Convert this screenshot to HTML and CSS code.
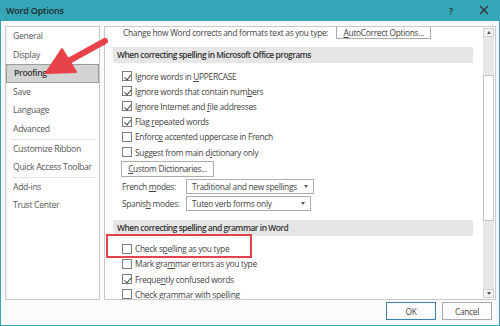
FILE: index.html
```html
<!DOCTYPE html>
<html lang="en">
<head>
  <meta charset="UTF-8" />
  <title>Word Options</title>
  <link rel="stylesheet" href="styles.css">
</head>
<body>
  <div class="window">
    <header class="titlebar">
      <span class="title">Word Options</span>
      <span class="title-btn help">?</span>
      <span class="title-btn close">
        <svg width="10" height="10" viewBox="0 0 10 10"><path d="M1 1 L9 9 M9 1 L1 9" stroke="#333" stroke-width="1.2" /></svg>
      </span>
    </header>

    <div class="dialog-body">
      <nav class="nav-panel">
        <div class="nav-item">General</div>
        <div class="nav-item">Display</div>
        <div class="nav-item selected">Proofing</div>
        <div class="nav-item">Save</div>
        <div class="nav-item">Language</div>
        <div class="nav-item">Advanced</div>
        <div class="nav-sep"></div>
        <div class="nav-item">Customize Ribbon</div>
        <div class="nav-item">Quick Access Toolbar</div>
        <div class="nav-sep"></div>
        <div class="nav-item">Add-ins</div>
        <div class="nav-item">Trust Center</div>
      </nav>

      <section class="options-panel">
        <div class="options-scroll">
          <div class="autocorrect-row">
            <span>Change how Word corrects and formats text as you type:</span>
            <button class="btn autocorrect-btn" type="button"><u>A</u>utoCorrect Options...</button>
          </div>

          <h2 class="group-title">When correcting spelling in Microsoft Office programs</h2>
          <div class="check-row"><span class="box checked"></span><span>Ignore words in <u>U</u>PPERCASE</span></div>
          <div class="check-row"><span class="box checked"></span><span>Ignore words that contain num<u>b</u>ers</span></div>
          <div class="check-row"><span class="box checked"></span><span>Ignore Internet and <u>f</u>ile addresses</span></div>
          <div class="check-row"><span class="box checked"></span><span>Flag <u>r</u>epeated words</span></div>
          <div class="check-row"><span class="box"></span><span>Enforc<u>e</u> accented uppercase in French</span></div>
          <div class="check-row"><span class="box"></span><span>Suggest from main d<u>i</u>ctionary only</span></div>
          <button class="btn dict-btn" type="button"><u>C</u>ustom Dictionaries...</button>
          <div class="mode-row">
            <span class="mode-label">French <u>m</u>odes:</span>
            <div class="select select-fr">Traditional and new spellings<span class="caret"></span></div>
          </div>
          <div class="mode-row">
            <span class="mode-label">Spanis<u>h</u> modes:</span>
            <div class="select select-es">Tuteo verb forms only<span class="caret"></span></div>
          </div>

          <h2 class="group-title second">When correcting spelling and grammar in Word</h2>
          <div class="check-row"><span class="box"></span><span>Check s<u>p</u>elling as you type</span></div>
          <div class="check-row"><span class="box"></span><span>Mark gra<u>m</u>mar errors as you type</span></div>
          <div class="check-row"><span class="box checked"></span><span>Freque<u>n</u>tly confused words</span></div>
          <div class="check-row"><span class="box"></span><span>C<u>h</u>eck grammar with spelling</span></div>
        </div>

        <div class="scrollbar">
          <div class="sb-arrow"><span class="tri up"></span></div>
          <div class="sb-track">
            <div class="sb-thumb"></div>
          </div>
          <div class="sb-arrow"><span class="tri down"></span></div>
        </div>
      </section>
    </div>

    <footer class="dialog-footer">
      <button class="btn footer-btn default" type="button">OK</button>
      <button class="btn footer-btn" type="button">Cancel</button>
    </footer>

    <!-- annotations drawn on top of the dialog -->
    <div class="highlight-box"></div>
    <svg class="arrow" width="120" height="90" viewBox="0 0 120 90">
      <line x1="104" y1="41" x2="64" y2="63" stroke="#e8434b" stroke-width="6" stroke-linecap="round" />
      <polygon points="45,73 61,49 75,72" fill="#e8434b" stroke="#e8434b" stroke-width="2" stroke-linejoin="round" />
    </svg>
  </div>
</body>
</html>
```

FILE: styles.css
```css
:root {
  --teal: #35a6b7;
  --text: #444;
  --border: #c9c9c9;
  --red: #e2424c;
}

* {
  box-sizing: border-box;
}

body {
  margin: 0;
  background: #fff;
  font-family: "Open Sans", "Noto Sans", sans-serif;
  font-size: 8.4px;
  letter-spacing: -0.3px;
  color: var(--text);
}

.window {
  position: relative;
  width: 500px;
  height: 326px;
  display: flex;
  flex-direction: column;
  background: #fbfbfb;
  border: 1px solid var(--teal);
  border-top: none;
  overflow: hidden;
}

/* title bar */
.titlebar {
  height: 21px;
  background: var(--teal);
  display: flex;
  align-items: center;
  padding: 0 0 1px 5px;
  flex-shrink: 0;
}

.title {
  flex: 1;
  font-size: 9px;
  font-weight: 600;
  letter-spacing: -0.2px;
  color: #1c2a2d;
}

.title-btn {
  width: 32px;
  text-align: center;
  color: #2a2a2a;
  font-weight: 600;
}

.help {
  font-size: 9px;
}

.close {
  display: flex;
  justify-content: center;
  padding-left: 2px;
}

/* panels */
.dialog-body {
  flex: 1;
  display: flex;
  gap: 4px;
  padding: 5px 3px 0 4px;
  min-height: 0;
}

.nav-panel {
  width: 95px;
  background: #fff;
  border: 1px solid var(--border);
}

.nav-item {
  height: 18.6px;
  line-height: 18.6px;
  padding-left: 7px;
  color: #555;
  font-size: 8.6px;
  white-space: nowrap;
}

.nav-item.selected {
  background: #d3d3d3;
  border: 1px solid #9d9d9d;
  line-height: 16.6px;
  font-weight: 600;
  color: #333;
}

.nav-sep {
  height: 1px;
  margin: 0 3px 0 6px;
  background: #e3e3e3;
}

.options-panel {
  flex: 1;
  display: flex;
  background: #fff;
  border: 1px solid var(--border);
  min-width: 0;
}

.options-scroll {
  flex: 1;
  overflow: hidden;
  padding: 0 10px 0 8px;
}

.autocorrect-row {
  display: flex;
  align-items: center;
  gap: 8px;
  margin-top: -2px;
  padding-left: 10px;
  height: 14px;
  white-space: nowrap;
}

.btn {
  font-family: inherit;
  font-size: 8.4px;
  letter-spacing: -0.3px;
  color: var(--text);
  background: #fdfdfd;
  border: 1px solid #acacac;
  padding: 0;
  cursor: default;
}

.autocorrect-btn {
  width: 95px;
  height: 14px;
}

.group-title {
  margin: 8px 0 0;
  height: 16px;
  line-height: 16px;
  background: #e6e6e6;
  font-size: 8.4px;
  font-weight: 600;
  letter-spacing: -0.45px;
  color: #333;
  padding-left: 4px;
}

.check-row {
  display: flex;
  align-items: center;
  height: 15.2px;
  padding-left: 9px;
  white-space: nowrap;
}

.group-title + .check-row {
  margin-top: 5.5px;
}

.box {
  width: 10px;
  height: 10px;
  border: 1px solid #7d7d7d;
  background: #fff;
  margin-right: 3px;
  flex-shrink: 0;
  position: relative;
}

.box.checked::after {
  content: "";
  position: absolute;
  left: 2.5px;
  top: 0.5px;
  width: 3px;
  height: 5.5px;
  border: solid #444;
  border-width: 0 1.2px 1.2px 0;
  transform: rotate(40deg);
}

.dict-btn {
  display: block;
  width: 93px;
  height: 16px;
  margin: 1px 0 2px 8px;
}

.mode-row {
  display: flex;
  align-items: center;
  height: 16.5px;
  padding-left: 9px;
  white-space: nowrap;
}

.mode-label {
  width: 64px;
}

.select {
  position: relative;
  height: 15px;
  line-height: 13px;
  border: 1px solid #acacac;
  padding-left: 5px;
  background: #fff;
}

.select-fr {
  width: 128px;
}

.select-es {
  width: 125px;
}

.caret {
  position: absolute;
  right: 5px;
  top: 5px;
  border-left: 2.5px solid transparent;
  border-right: 2.5px solid transparent;
  border-top: 3px solid #555;
}

/* scrollbar */
.scrollbar {
  width: 11px;
  margin: 1px 1px 1px 0;
  display: flex;
  flex-direction: column;
  background: #e8e8e8;
}

.sb-arrow {
  height: 9px;
  background: #f3f3f3;
  border: 1px solid #cfcfcf;
  display: flex;
  align-items: center;
  justify-content: center;
}

.tri {
  border-left: 2px solid transparent;
  border-right: 2px solid transparent;
}

.tri.up {
  border-bottom: 3px solid #555;
}

.tri.down {
  border-top: 3px solid #555;
}

.sb-track {
  flex: 1;
  padding-top: 38px;
}

.sb-thumb {
  height: 146px;
  background: #fff;
  border: 1px solid #c4c4c4;
}

/* footer buttons */
.dialog-footer {
  height: 25px;
  display: flex;
  justify-content: flex-end;
  gap: 6px;
  padding: 2px 7px 0 0;
  flex-shrink: 0;
}

.footer-btn {
  width: 50px;
  height: 18px;
}

.footer-btn.default {
  border-color: #3c7fb1;
}

/* annotations */
.highlight-box {
  position: absolute;
  left: 105px;
  top: 234px;
  width: 146px;
  height: 24px;
  border: 2.5px solid var(--red);
}

.arrow {
  position: absolute;
  left: 0;
  top: 0;
}
```
